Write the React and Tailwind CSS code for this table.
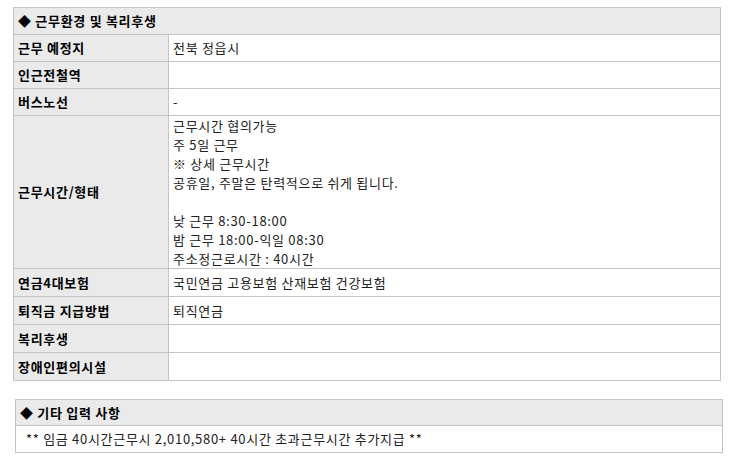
import React from "react";

const rows = [
  { label: "근무 예정지", value: ["전북 정읍시"], h: "h-[27px]" },
  { label: "인근전철역", value: [""], h: "h-[27px]" },
  { label: "버스노선", value: ["-"], h: "h-[27px]" },
  {
    label: "근무시간/형태",
    value: [
      "근무시간 협의가능",
      "주 5일 근무",
      "※ 상세 근무시간",
      "공휴일, 주말은 탄력적으로 쉬게 됩니다.",
      "",
      "낮 근무 8:30-18:00",
      "밤 근무 18:00-익일 08:30",
      "주소정근로시간 : 40시간",
    ],
    tall: true,
    h: "h-[153px]",
  },
  { label: "연금4대보험", value: ["국민연금 고용보험 산재보험 건강보험"], h: "h-[28px]" },
  { label: "퇴직금 지급방법", value: ["퇴직연금"], h: "h-[28px]" },
  { label: "복리후생", value: [""], h: "h-[28px]" },
  { label: "장애인편의시설", value: [""], h: "h-[28px]" },
];

const font = { fontFamily: '"Noto Sans CJK KR", "Noto Sans", sans-serif' };

const App = () => {
  return (
    <div
      className="min-h-screen bg-white text-[13px] tracking-[0.7px] text-[#222]"
      style={font}
    >
      <div className="pt-[7px] pl-[13px]">
        <div className="w-[708px] border border-[#c4c4c4]">
          <div className="h-[26px] flex items-center px-[4px] bg-[#eaeaea] font-bold text-black">
            ◆ 근무환경 및 복리후생
          </div>
          {rows.map((r, i) => (
            <div
              key={i}
              className={"grid grid-cols-[154px_1fr] border-t border-[#c4c4c4] " + r.h}
            >
              <div className="bg-[#eaeaea] flex items-center px-[4px] font-bold text-black">
                {r.label}
              </div>
              <div
                className={
                  r.tall
                    ? "border-l border-[#c4c4c4] px-[4px] leading-[19px]"
                    : "border-l border-[#c4c4c4] px-[4px] flex items-center"
                }
              >
                {r.tall ? (
                  r.value.map((line, j) => (
                    <div key={j} className="h-[19px]">
                      {line}
                    </div>
                  ))
                ) : (
                  <span>{r.value[0]}</span>
                )}
              </div>
            </div>
          ))}
        </div>
      </div>

      <div className="pt-[18px] pl-[15px]">
        <div className="w-[708px] border border-[#c4c4c4]">
          <div className="h-[25px] flex items-center px-[4px] bg-[#eaeaea] font-bold text-black">
            ◆ 기타 입력 사항
          </div>
          <div className="h-[27px] border-t border-[#c4c4c4] flex items-center px-[10px]">
            ** 임금 40시간근무시 2,010,580+ 40시간 초과근무시간 추가지급 **
          </div>
        </div>
      </div>
    </div>
  );
};

export default App;
